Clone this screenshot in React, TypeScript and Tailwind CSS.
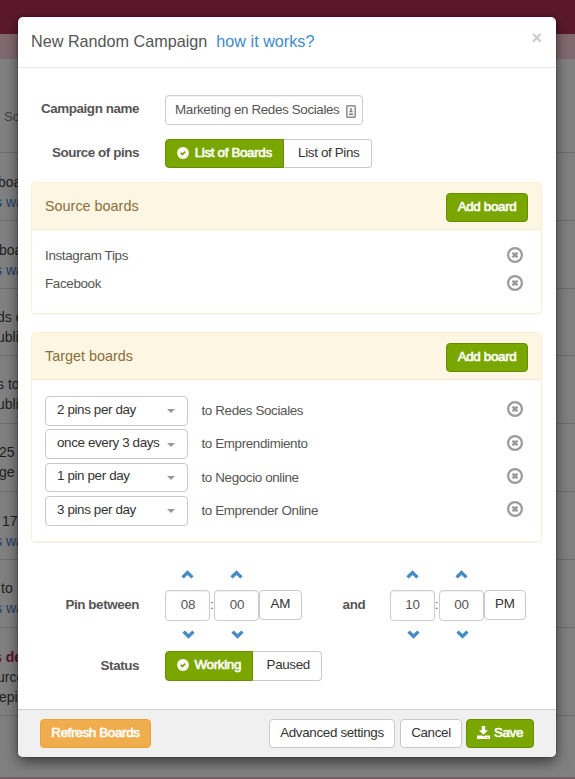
import type { ReactNode } from 'react';
import clsx from 'clsx';

const backgroundRows: { height: string; lines: { text: string; tone: string; left: string }[] }[] = [
  { height: 'h-[94px] pt-[48px]', lines: [{ text: 'Sourc', tone: 'text-[#414141] text-[13px]', left: 'ml-1' }] },
  { height: 'h-[68px] pt-[19px]', lines: [{ text: 'board', tone: 'text-[#202020]', left: '-ml-[2px]' }, { text: 's was', tone: 'text-[#22406b]', left: '-ml-[5px]' }] },
  { height: 'h-[68px] pt-[19px]', lines: [{ text: 'board', tone: 'text-[#202020]', left: '-ml-px' }, { text: 's was', tone: 'text-[#22406b]', left: '-ml-[5px]' }] },
  { height: 'h-[67px] pt-[18px]', lines: [{ text: 'ds of', tone: 'text-[#202020]', left: '-ml-[3px]' }, { text: 'ublish', tone: 'text-[#202020]', left: '-ml-[3px]' }] },
  { height: 'h-[68px] pt-[18px]', lines: [{ text: 's to', tone: 'text-[#202020]', left: '-ml-[3px]' }, { text: 'ublish', tone: 'text-[#202020]', left: '-ml-[3px]' }] },
  { height: 'h-[68px] pt-[18px]', lines: [{ text: '25', tone: 'text-[#202020]', left: '-ml-px' }, { text: 'ge', tone: 'text-[#202020]', left: '-ml-px' }] },
  { height: 'h-[68px] pt-[19px]', lines: [{ text: '17', tone: 'text-[#202020]', left: 'ml-[2px]' }, { text: 's was', tone: 'text-[#22406b]', left: '-ml-[5px]' }] },
  { height: 'h-[68px] pt-[18px]', lines: [{ text: 'to', tone: 'text-[#202020]', left: 'ml-px' }, { text: 's was', tone: 'text-[#22406b]', left: '-ml-[5px]' }] },
  { height: 'h-[88px] pt-[19px]', lines: [{ text: 's deleted', tone: 'text-[#5b112d] font-bold', left: '-ml-[6px]' }, { text: 'urce', tone: 'text-[#202020]', left: '-ml-[3px]' }, { text: 'epin', tone: 'text-[#202020]', left: '-ml-px' }] },
];

function CheckSign() {
  return (
    <svg viewBox="0 0 12 12" className="h-3 w-3 shrink-0">
      <circle cx="6" cy="6" r="5.9" fill="#fff" />
      <path d="M3.7 5.8 5.4 7.5 8.2 4.7" fill="none" stroke="#7aa600" strokeWidth="1.8" />
    </svg>
  );
}

function RemoveCircle() {
  return (
    <svg viewBox="0 0 16 16" className="h-4 w-4 shrink-0">
      <circle cx="8" cy="8" r="6.9" fill="none" stroke="#9b9b9b" strokeWidth="2.2" />
      <path d="M5.6 5.6l4.8 4.8M10.4 5.6l-4.8 4.8" stroke="#9b9b9b" strokeWidth="2.7" />
    </svg>
  );
}

function Chevron({ down = false }: { down?: boolean }) {
  return (
    <svg viewBox="0 0 13 9" className={clsx('block h-[9px] w-[13px]', down && 'rotate-180')}>
      <path d="M6.5.3 12.6 6.2 10.3 8.5 6.5 5.1 2.7 8.5.4 6.2z" fill="#458bc4" />
    </svg>
  );
}

function SaveIcon() {
  return (
    <svg viewBox="0 0 13 13" className="h-[13px] w-[13px] shrink-0" fill="#fff">
      <path d="M4.8 0h3.4v4.2h2.7L6.5 8.8 2.1 4.2h2.7zM0 9.6h4.9l1.6 1 1.6-1H13V13H0z" />
      <path d="M9.8 11h1.8v.8H9.8z" fill="#7aa600" />
    </svg>
  );
}

function Button({ className, children }: { className?: string; children: ReactNode }) {
  return (
    <button
      className={clsx(
        'flex shrink-0 items-center justify-center border pb-[2px] text-[13.4px] leading-none tracking-[-0.34px] whitespace-nowrap',
        className,
      )}
    >
      {children}
    </button>
  );
}

const green = 'border-[#668c00] bg-[#7aa600] text-white [-webkit-text-stroke:0.6px_white]';
const plain = 'border-[#c9c9c9] bg-white text-[#333]';

function Label({ children }: { children: ReactNode }) {
  return <div className="w-[121px] shrink-0 text-right text-[13.4px] font-bold tracking-[-0.42px] whitespace-nowrap text-[#555]">{children}</div>;
}

function Panel({ title, className, children }: { title: string; className: string; children: ReactNode }) {
  return (
    <section className={clsx('mr-[14px] ml-[13px] rounded-[4px] border border-[#faf0d2] shadow-[0_1px_1px_rgba(0,0,0,0.05)]', className)}>
      <header className="flex h-[47px] items-center justify-between rounded-t-[3px] border-b border-[#faebcc] bg-[#fdf6e2] pr-[13px] pl-[13px]">
        <h4 className="pt-[2px] text-[14.4px] text-[#8a6d3b]">{title}</h4>
        <Button className={clsx(green, 'mt-[3px] h-[29px] w-[82px] rounded-[4px]')}>Add board</Button>
      </header>
      {children}
    </section>
  );
}

function TimeCell({ value }: { value: string }) {
  return (
    <div className="w-[45px]">
      <div className="flex justify-center"><Chevron /></div>
      <div className="mt-[11px] flex h-[31px] items-center justify-center rounded-[4px] border border-[#ccc] pl-px text-[13.4px] tracking-[-0.3px] text-[#555] shadow-[inset_0_1px_1px_rgba(0,0,0,0.06)]">
        {value}
      </div>
      <div className="mt-[9px] flex justify-center pl-[2px]"><Chevron down /></div>
    </div>
  );
}

function TimePicker({ hour, minute, period }: { hour: string; minute: string; period: string }) {
  return (
    <div className="flex">
      <TimeCell value={hour} />
      <div className="w-1 pt-[25px] text-center text-[13px] leading-[20px] text-[#555]">:</div>
      <TimeCell value={minute} />
      <Button className={clsx(plain, 'mt-5 h-[30px] w-[42.5px] rounded-[4px]')}>{period}</Button>
    </div>
  );
}

const targets = [
  ['2 pins per day', 'to Redes Sociales'],
  ['once every 3 days', 'to Emprendimiento'],
  ['1 pin per day', 'to Negocio online'],
  ['3 pins per day', 'to Emprender Online'],
];

export default function App() {
  return (
    <div className="relative h-[779px] w-[575px] overflow-hidden bg-[#808080] font-['Liberation_Sans',Arial,sans-serif]">
      <div className="h-[34px] bg-[#5b182d]" />
      <div className="h-[25px] bg-[#80696f]" />
      {backgroundRows.map((row, i) => (
        <div key={i} className={clsx('border-b border-[#6d6d6d] text-[14px] leading-[20px] whitespace-nowrap', row.height)}>
          {row.lines.map((line) => (
            <div key={line.text} className={clsx(line.tone, line.left)}>{line.text}</div>
          ))}
        </div>
      ))}
      <div className="mt-[61px] h-[2px] bg-[#775c64]" />

      <div
        role="dialog"
        className="absolute top-[17px] left-[18px] flex h-[740px] w-[538px] flex-col rounded-[5px] bg-white shadow-[0_5px_14px_rgba(0,0,0,0.55),0_0_2px_rgba(0,0,0,0.5)]"
      >
        <header className="flex h-[51px] shrink-0 justify-between border-b border-[#e5e5e5] pr-[14px] pl-[13px]">
          <h3 className="pt-[12px] text-[16.2px] leading-[24px] whitespace-nowrap text-[#555]">
            New Random Campaign <a className="ml-[4.5px] text-[#428bca]">how it works?</a>
          </h3>
          <button className="h-5 pt-[11px] text-[18px] leading-[20px] font-bold text-[#ccc]">×</button>
        </header>

        <div className="mt-[27px] flex h-[30px] shrink-0 gap-[26px]">
          <Label><div className="leading-[27px]">Campaign name</div></Label>
          <div className="flex w-[198px] items-center justify-between rounded-[4px] border border-[#ccc] pr-[6px] pl-[9px] text-[13.4px] tracking-[-0.36px] whitespace-nowrap text-[#555] shadow-[inset_0_1px_1px_rgba(0,0,0,0.06)]">
            <span>Marketing en Redes Sociales</span>
            <svg viewBox="0 0 10 13" className="mt-[2px] h-[13px] w-[10px] shrink-0">
              <rect x=".8" y=".8" width="8.4" height="11.4" rx=".8" fill="#f8f8f8" stroke="#8f8f8f" strokeWidth="1.5" />
              <path d="M5 3v3M3.5 6.5h3M3 9.3h4" stroke="#808080" strokeWidth="1.4" />
            </svg>
          </div>
        </div>

        <div className="mt-[14px] flex h-[29px] shrink-0 gap-[26px]">
          <Label><div className="leading-[27px]">Source of pins</div></Label>
          <div className="flex">
            <Button className={clsx(green, 'w-[118.5px] gap-[6px] rounded-l-[4px]')}><CheckSign />List of Boards</Button>
            <Button className={clsx(plain, 'w-[88.5px] rounded-r-[4px] border-l-0 pl-[3px]')}>List of Pins</Button>
          </div>
        </div>

        <Panel title="Source boards" className="mt-[14px] h-[132px] shrink-0">
          <div className="pt-[11px] pr-[18px] pl-[13px] text-[13.4px] tracking-[-0.34px] text-[#555]">
            {['Instagram Tips', 'Facebook'].map((name) => (
              <div key={name} className="flex h-7 items-center justify-between"><span className="pt-[2px]">{name}</span><RemoveCircle /></div>
            ))}
          </div>
        </Panel>

        <Panel title="Target boards" className="mt-[18px] h-[210px] shrink-0">
          <div className="pt-[16px] pr-[18px] pl-[13px]">
            {targets.map(([rate, board]) => (
              <div key={board} className="flex h-[33.4px] items-start text-[13.4px] tracking-[-0.37px]">
                <div className="flex h-[29.5px] w-[143px] items-center justify-between rounded-[4px] border border-[#c9c9c9] pr-3 pb-[2px] pl-[11px] whitespace-nowrap text-[#333]">
                  <span>{rate}</span>
                  <i className="mt-[3px] border-x-4 border-t-4 border-x-transparent border-t-[#999]" />
                </div>
                <span className="ml-[13.5px] flex-1 leading-[29px] text-[#555]">{board}</span>
                <div className="pt-[5.3px]"><RemoveCircle /></div>
              </div>
            ))}
          </div>
        </Panel>

        <div className="mt-[28px] flex h-[70px] shrink-0">
          <Label><div className="pt-5 leading-[29px]">Pin between</div></Label>
          <div className="ml-[26px]"><TimePicker hour="08" minute="00" period="AM" /></div>
          <div className="w-[88px] pt-5 pl-[41px] text-[13.4px] leading-[29px] font-bold tracking-[-0.3px] text-[#555]">and</div>
          <TimePicker hour="10" minute="00" period="PM" />
        </div>

        <div className="mt-[11px] flex h-[30px] shrink-0 gap-[26px]">
          <Label><div className="leading-[29px]">Status</div></Label>
          <div className="flex">
            <Button className={clsx(green, 'w-[87.5px] gap-[6px] rounded-l-[4px] tracking-[-0.3px]')}><CheckSign />Working</Button>
            <Button className={clsx(plain, 'w-[69.5px] rounded-r-[4px] border-l-0 pl-[3px]')}>Paused</Button>
          </div>
        </div>

        <footer className="mt-auto flex h-[48px] shrink-0 items-start rounded-b-[5px] border-t border-[#d0d0d0] bg-[#f0f0f0] pt-[9px] pl-[22px]">
          <Button className="h-[29px] w-[111px] rounded-[4px] border-[#eea236] bg-[#f0ad4e] text-white [-webkit-text-stroke:0.6px_white]">Refresh Boards</Button>
          <Button className={clsx(plain, 'ml-[118px] h-[29px] w-[126px] rounded-[4px]')}>Advanced settings</Button>
          <Button className={clsx(plain, 'ml-[5px] h-[29px] w-[62px] rounded-[4px]')}>Cancel</Button>
          <Button className={clsx(green, 'ml-1 h-[29px] w-[68px] gap-1 rounded-[4px]')}><SaveIcon />Save</Button>
        </footer>
      </div>
    </div>
  );
}
